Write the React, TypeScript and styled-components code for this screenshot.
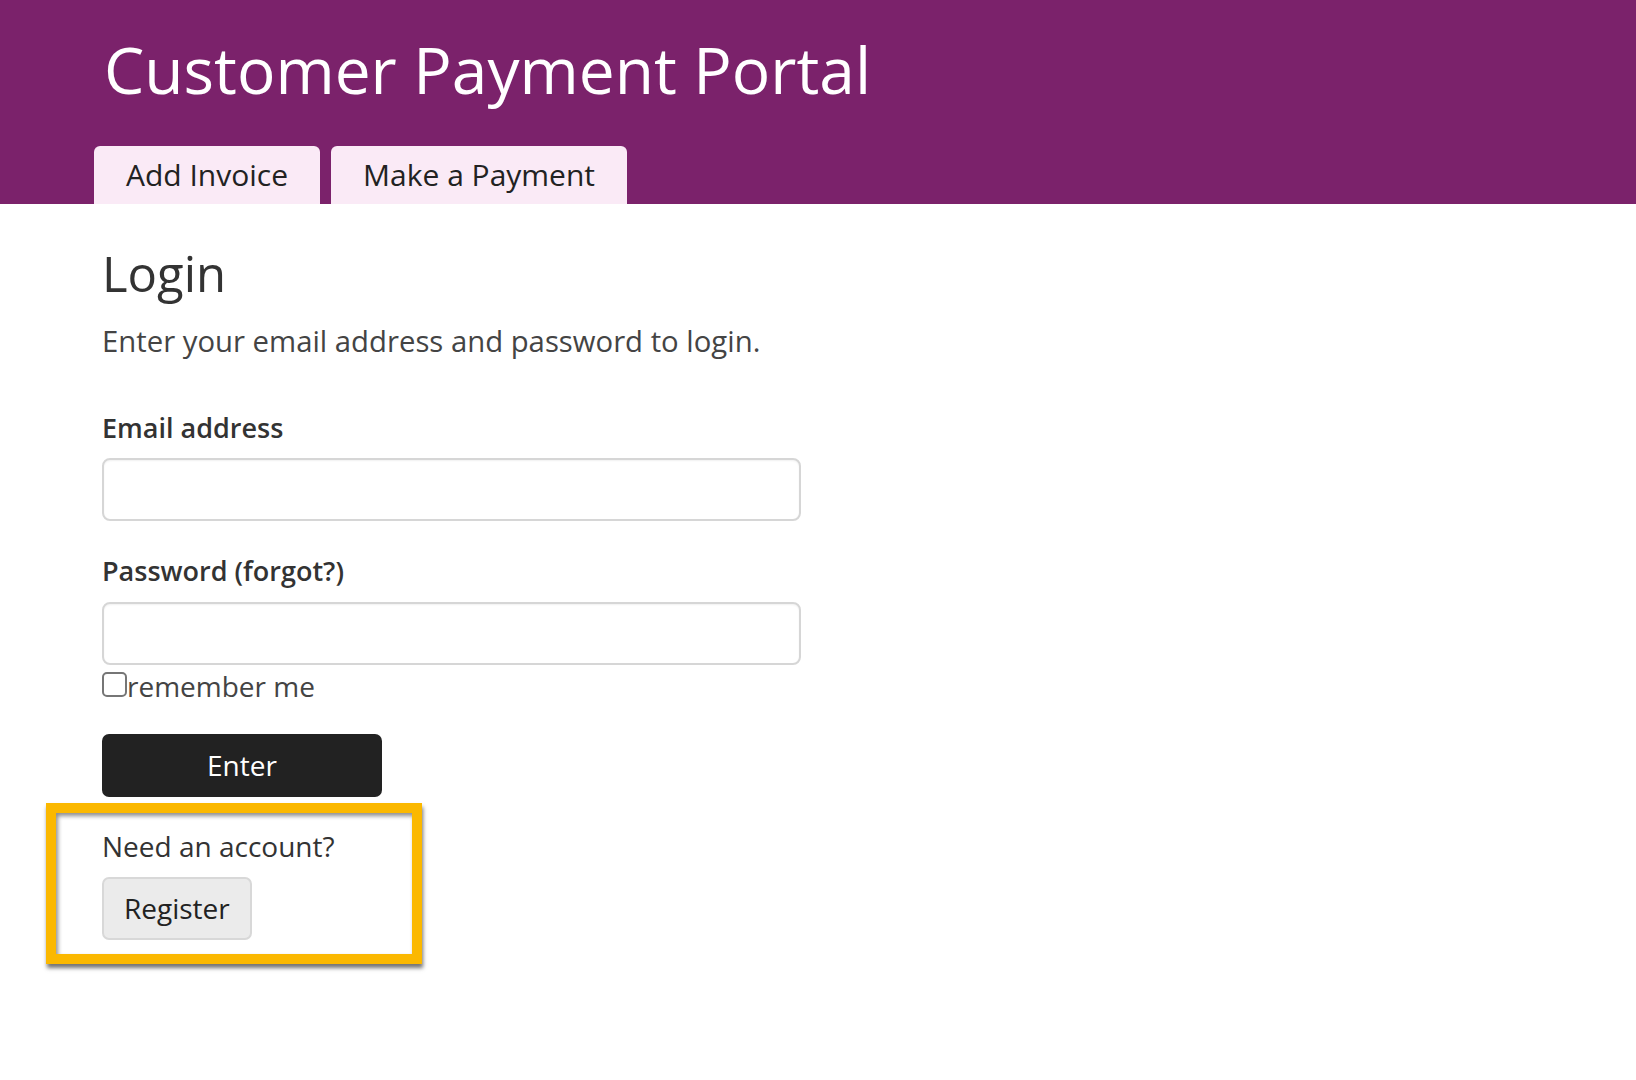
import React from "react";
import styled, { createGlobalStyle } from "styled-components";

const Global = createGlobalStyle`
  html, body { margin: 0; padding: 0; background: #ffffff; }
  body { font-family: "Open Sans", "Noto Sans", Arial, sans-serif; color: #333333; }
  * { box-sizing: border-box; }
`;

const Header = styled.header`
  background: #7b226b;
  height: 204px;
  padding: 32px 0 0 94px;
  display: flex;
  flex-direction: column;
`;

const Title = styled.h1`
  margin: 0 0 0 10px;
  font-size: 64px;
  line-height: 1.2;
  font-weight: 400;
  color: #ffffff;
`;

const Tabs = styled.nav`
  display: flex;
  gap: 11px;
  margin-top: auto;
`;

const Tab = styled.a`
  display: block;
  height: 58px;
  line-height: 58px;
  padding: 0 32px 0 32px;
  background: #faeaf6;
  color: #222222;
  font-size: 30px;
  border-radius: 6px 6px 0 0;
  text-decoration: none;
`;

const Main = styled.main`
  padding: 40px 0 40px 102px;
`;

const Heading = styled.h2`
  margin: 0;
  font-size: 49px;
  line-height: 1.2;
  font-weight: 400;
  color: #333333;
`;

const Lead = styled.p`
  margin: 17px 0 0;
  font-size: 29.3px;
  line-height: 1.5;
  color: #444444;
`;

const Form = styled.form`
  margin-top: 44px;
  display: flex;
  flex-direction: column;
  align-items: flex-start;
`;

const Label = styled.label<{ $gap?: number }>`
  display: block;
  margin: ${(p) => p.$gap ?? 0}px 0 10px;
  font-size: 27px;
  line-height: 1.5;
  font-weight: 600;
  color: #333333;
`;

const Input = styled.input`
  width: 699px;
  height: 63px;
  border: 2px solid #d6d6d6;
  border-radius: 8px;
  box-shadow: inset 0 1px 2px rgba(0, 0, 0, 0.06);
  font-size: 26px;
  padding: 0 14px;
  font-family: inherit;
  background: #ffffff;
`;

const CheckRow = styled.label`
  display: flex;
  align-items: flex-start;
  font-size: 28px;
  line-height: 1.5;
  color: #444444;
`;

const Check = styled.input`
  appearance: none;
  width: 25px;
  height: 25px;
  margin: 7px 0 0 0;
  border: 2px solid #767676;
  border-radius: 5px;
  background: #ffffff;
`;

const EnterButton = styled.button`
  margin-top: 27px;
  width: 280px;
  height: 63px;
  background: #222222;
  color: #ffffff;
  border: none;
  border-radius: 7px;
  font-family: inherit;
  font-size: 28px;
`;

const Highlight = styled.section`
  margin: 6px 0 0 -56px;
  width: 376px;
  border: 10px solid #fbb800;
  padding: 12px 0 14px 46px;
  box-shadow: 1px 4px 4px rgba(0, 0, 0, 0.55), inset 2px 3px 4px rgba(0, 0, 0, 0.45);
  display: flex;
  flex-direction: column;
  align-items: flex-start;
`;

const Note = styled.p`
  margin: 0;
  font-size: 28px;
  line-height: 1.5;
  color: #333333;
`;

const RegisterButton = styled.button`
  margin-top: 10px;
  height: 63px;
  padding: 0 20px;
  background: #ebebeb;
  border: 2px solid #d8d8d8;
  border-radius: 7px;
  font-family: inherit;
  font-size: 28px;
  color: #222222;
`;

export default function App() {
  return (
    <>
      <Global />
      <Header>
        <Title>Customer Payment Portal</Title>
        <Tabs>
          <Tab>Add Invoice</Tab>
          <Tab>Make a Payment</Tab>
        </Tabs>
      </Header>
      <Main>
        <Heading>Login</Heading>
        <Lead>Enter your email address and password to login.</Lead>
        <Form onSubmit={(e) => e.preventDefault()}>
          <Label htmlFor="email">Email address</Label>
          <Input id="email" type="email" />
          <Label htmlFor="password" $gap={30}>Password (forgot?)</Label>
          <Input id="password" type="password" />
          <CheckRow>
            <Check type="checkbox" />
            remember me
          </CheckRow>
          <EnterButton type="submit">Enter</EnterButton>
          <Highlight>
            <Note>Need an account?</Note>
            <RegisterButton type="button">Register</RegisterButton>
          </Highlight>
        </Form>
      </Main>
    </>
  );
}
